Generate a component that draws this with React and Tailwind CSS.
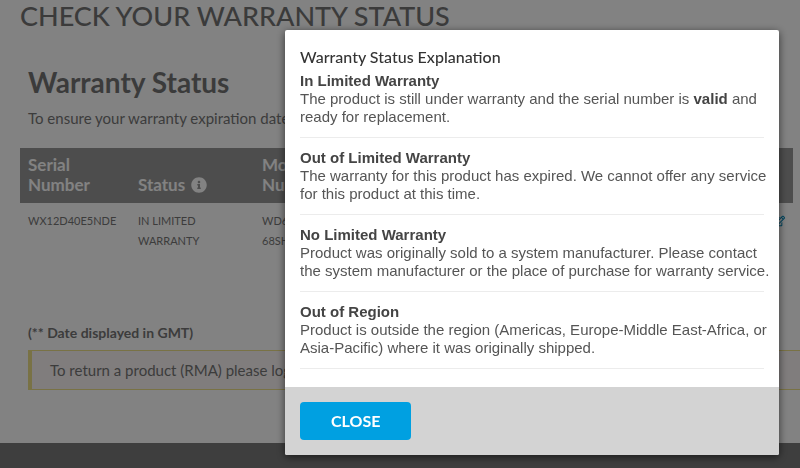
import { useState } from "react";
import { FaInfoCircle, FaRegEdit } from "react-icons/fa";

const explanations = [
  {
    title: "In Limited Warranty",
    body: (
      <>
        The product is still under warranty and the serial number is{" "}
        <strong className="text-[#444]">valid</strong> and ready for
        replacement.
      </>
    ),
  },
  {
    title: "Out of Limited Warranty",
    body: "The warranty for this product has expired. We cannot offer any service for this product at this time.",
  },
  {
    title: "No Limited Warranty",
    body: "Product was originally sold to a system manufacturer. Please contact the system manufacturer or the place of purchase for warranty service.",
  },
  {
    title: "Out of Region",
    body: "Product is outside the region (Americas, Europe-Middle East-Africa, or Asia-Pacific) where it was originally shipped.",
  },
];

function StatusDialog({ onClose }) {
  return (
    <div className="fixed inset-0 z-10 flex items-start justify-end bg-black/49 pt-[30px] pr-[21px] pl-4">
      <div
        role="dialog"
        aria-modal="true"
        aria-labelledby="dialog-title"
        className="w-full max-w-[494px] overflow-hidden rounded-xs bg-white shadow-[0_2px_8px_rgba(0,0,0,0.6)]"
      >
        <div className="px-[15px] pt-[15px] pb-[18px]">
          <h2
            id="dialog-title"
            className="mb-[3px] text-base leading-6 font-medium text-[#333]"
          >
            Warranty Status Explanation
          </h2>
          {explanations.map((item) => (
            <section
              key={item.title}
              className="mb-[11px] border-b border-[#ececec] pb-[11px] font-['Liberation_Sans',Arial,sans-serif] text-[15px] leading-[18px] text-[#555] last:mb-0"
            >
              <h3 className="font-bold text-[#444]">{item.title}</h3>
              <p className="-mr-2">{item.body}</p>
            </section>
          ))}
        </div>
        <div className="bg-[#d3d3d3] px-[15px] py-[15px]">
          <button
            type="button"
            onClick={onClose}
            className="h-[38px] rounded-sm bg-[#00a0e1] px-[31px] text-base font-bold text-white"
          >
            CLOSE
          </button>
        </div>
      </div>
    </div>
  );
}

export default function App() {
  const [open, setOpen] = useState(true);

  return (
    <div className="flex min-h-screen flex-col overflow-hidden bg-white font-[Lato,sans-serif] text-[#777]">
      <main className="grow pb-[53px]">
        <h1 className="pl-5 text-[27px] leading-8 font-medium text-[#757575]">
          CHECK YOUR WARRANTY STATUS
        </h1>
        <h2 className="mt-8 pl-7 text-[28px] leading-9 font-bold text-[#757575]">
          Warranty Status
        </h2>
        <p className="mt-2 pl-7 text-[15px] leading-5 whitespace-nowrap">
          To ensure your warranty expiration date
        </p>

        <div className="mt-5 mr-[7px] ml-5 h-[172px]">
          <table className="w-full table-fixed border-collapse text-left">
            <thead className="bg-[#989898] text-[17px] leading-5 text-white">
              <tr className="h-[55px] align-bottom">
                <th className="w-[110px] pb-2 pl-2">
                  Serial
                  <br />
                  Number
                </th>
                <th className="w-[124px] pb-2 pl-2">
                  <span className="flex items-center gap-1.5">
                    Status
                    <button
                      type="button"
                      aria-label="Status explanation"
                      onClick={() => setOpen(true)}
                    >
                      <FaInfoCircle className="size-4" />
                    </button>
                  </span>
                </th>
                <th className="pb-2 pl-2">
                  Model
                  <br />
                  Number
                </th>
                <th className="w-10" aria-label="Actions" />
              </tr>
            </thead>
            <tbody className="text-[11px] leading-5">
              <tr className="align-top">
                <td className="pt-2 pl-2">WX12D40E5NDE</td>
                <td className="pt-2 pl-2">
                  IN LIMITED
                  <br />
                  WARRANTY
                </td>
                <td className="pt-2 pl-2">
                  WD60
                  <br />
                  68SH
                </td>
                <td className="pt-3 pr-2">
                  <button
                    type="button"
                    aria-label="Edit"
                    className="ml-auto block text-[#0088bb]"
                  >
                    <FaRegEdit className="size-3" />
                  </button>
                </td>
              </tr>
            </tbody>
          </table>
        </div>

        <p className="mt-1 pl-7 text-sm leading-[18px] font-bold">
          (** Date displayed in GMT)
        </p>
        <div className="mt-2 ml-7 border-y border-l-4 border-[#eedf88] bg-[#fbf5f5] py-[9px] pl-[18px] text-[15px] leading-5 whitespace-nowrap">
          To return a product (RMA) please login
        </div>
      </main>
      <footer className="h-[25px] bg-[#7a7a7a]" />
      {open && <StatusDialog onClose={() => setOpen(false)} />}
    </div>
  );
}
